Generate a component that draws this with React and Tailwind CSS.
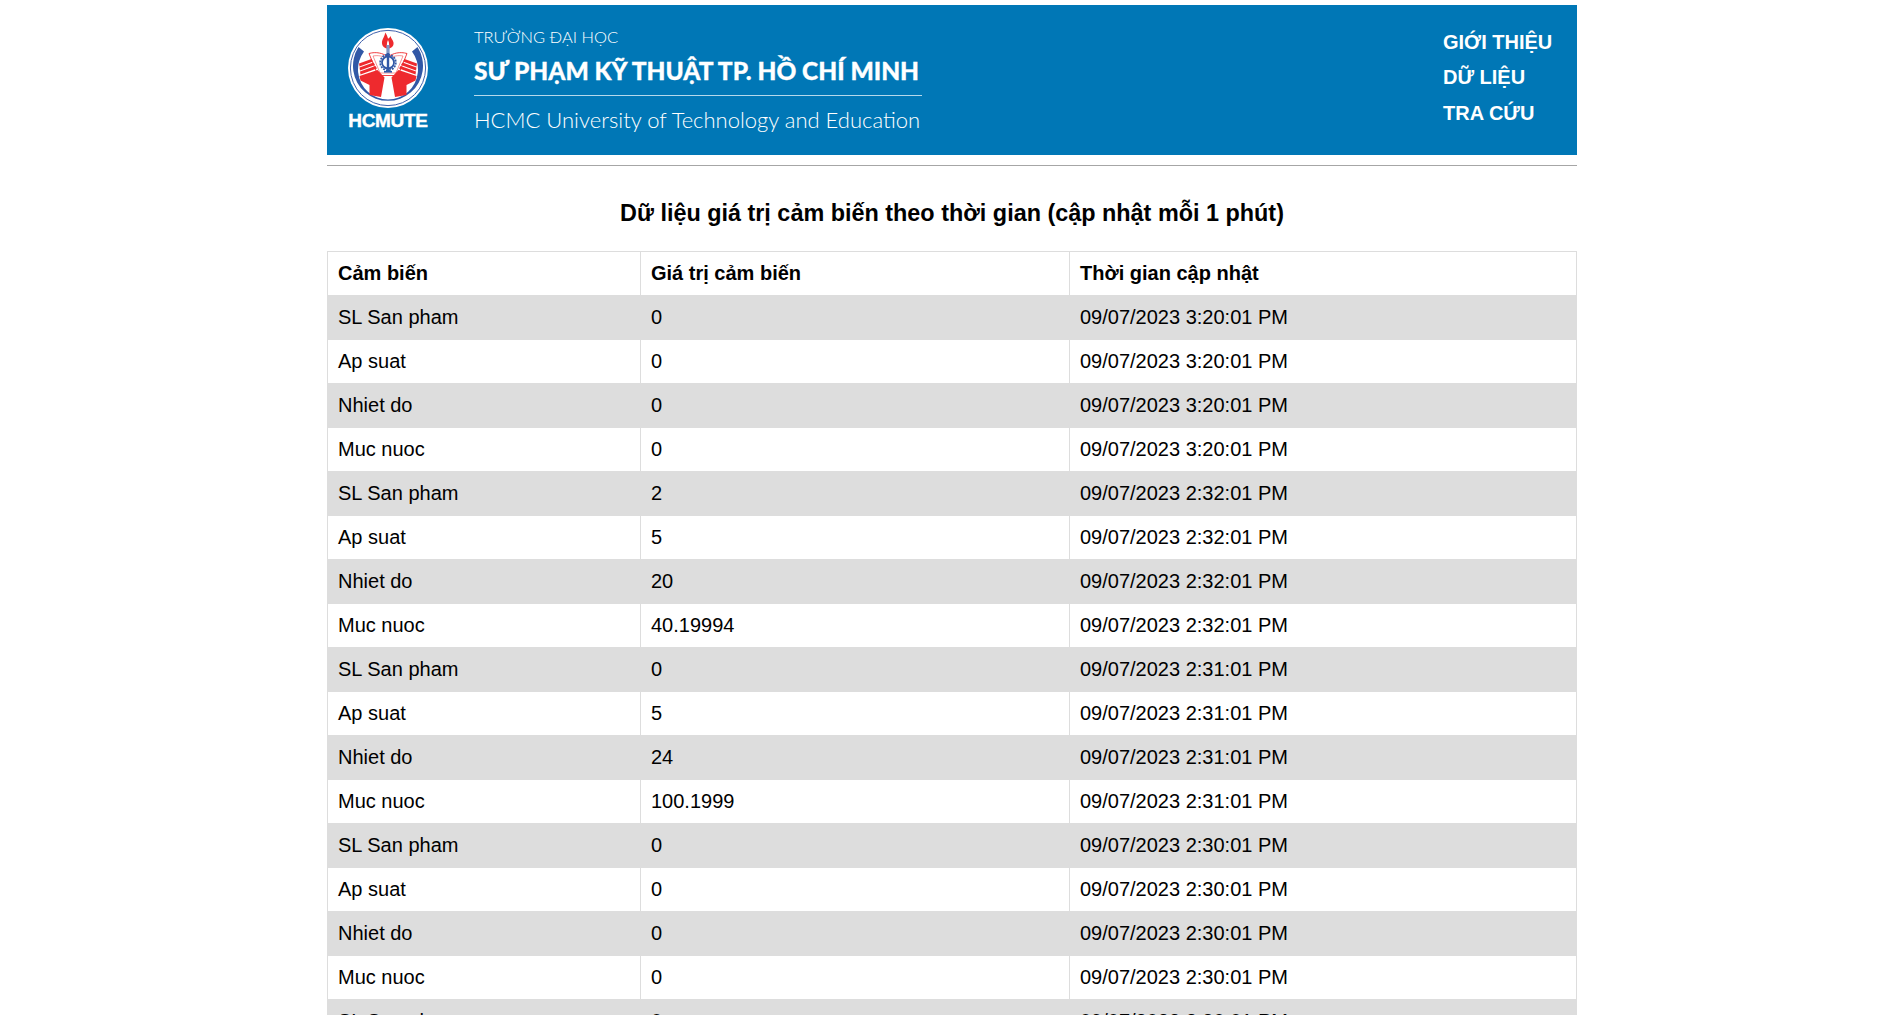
import React from 'react';

const rows = [
  ['SL San pham', '0', '09/07/2023 3:20:01 PM'],
  ['Ap suat', '0', '09/07/2023 3:20:01 PM'],
  ['Nhiet do', '0', '09/07/2023 3:20:01 PM'],
  ['Muc nuoc', '0', '09/07/2023 3:20:01 PM'],
  ['SL San pham', '2', '09/07/2023 2:32:01 PM'],
  ['Ap suat', '5', '09/07/2023 2:32:01 PM'],
  ['Nhiet do', '20', '09/07/2023 2:32:01 PM'],
  ['Muc nuoc', '40.19994', '09/07/2023 2:32:01 PM'],
  ['SL San pham', '0', '09/07/2023 2:31:01 PM'],
  ['Ap suat', '5', '09/07/2023 2:31:01 PM'],
  ['Nhiet do', '24', '09/07/2023 2:31:01 PM'],
  ['Muc nuoc', '100.1999', '09/07/2023 2:31:01 PM'],
  ['SL San pham', '0', '09/07/2023 2:30:01 PM'],
  ['Ap suat', '0', '09/07/2023 2:30:01 PM'],
  ['Nhiet do', '0', '09/07/2023 2:30:01 PM'],
  ['Muc nuoc', '0', '09/07/2023 2:30:01 PM'],
  ['SL San pham', '0', '09/07/2023 2:30:01 PM'],
];

const Logo = () => (
  <svg width="80" height="80" viewBox="0 0 80 80">
    <circle cx="40" cy="40" r="40" fill="#ffffff" />
    <circle cx="40" cy="40" r="37.6" fill="none" stroke="#3f62ad" strokeWidth="1" />
    {/* open ring */}
    <path d="M10.5 19 A35 35 0 1 0 69.5 19 L64 23.5 A30 30 0 1 1 16 23.5 Z" fill="#3158a6" />
    {/* flame and torch */}
    <path d="M37 4.5 C37.5 8 33.5 11 34 15.5 C34.5 19 37 20.5 40 20.5 C43.5 20.5 46 18 45.5 14.5 C45 11.5 43 11 42.5 8 C41.5 10 40.5 10.5 40 10.5 C39.5 8.5 38.5 6 37 4.5 Z" fill="#ee2a2e" />
    <path d="M40 12 C38.5 15 38.5 18 40 20 C41.5 18 41.5 15 40 12 Z" fill="#ffffff" />
    <rect x="38.4" y="17" width="3.2" height="11" fill="#7f96c6" />
    {/* book */}
    <path d="M21 25.5 C28 23.5 35 25 40 29 C45 25 52 23.5 59 25.5 L50 47.5 L30 47.5 Z" fill="#ffffff" stroke="#ee2a2e" strokeWidth="0.9" />
    <path d="M25 28 C30 27 35 28 40 31 C45 28 50 27 55 28 L48 45 L32 45 Z" fill="#ffffff" stroke="#ee2a2e" strokeWidth="0.5" />
    {/* gear with phi */}
    <circle cx="40" cy="34.5" r="7.8" fill="none" stroke="#3158a6" strokeWidth="1.8" strokeDasharray="2 1.05" />
    <circle cx="40" cy="34.5" r="6" fill="#ffffff" stroke="#3158a6" strokeWidth="1.8" />
    <rect x="38.8" y="25" width="2.4" height="19" fill="#3158a6" />
    <rect x="36" y="43" width="8" height="1.6" fill="#3158a6" />
    {/* left hand */}
    <path d="M11 35.5 L23.5 31 L25 33.5 L11.5 38.5 Z M11.5 39.5 L25.5 34.5 L27 37 L12 42.5 Z M12 43.5 L27.5 38 L29 40.5 L12.5 46.5 Z" fill="#ee2a2e" />
    <path d="M11.5 48 L29.5 42 L36.5 49.5 L33 69 L21.5 67 L21.5 57 L12.5 52.5 Z" fill="#ee2a2e" />
    {/* right hand */}
    <path d="M69 35.5 L56.5 31 L55 33.5 L68.5 38.5 Z M68.5 39.5 L54.5 34.5 L53 37 L68 42.5 Z M68 43.5 L52.5 38 L51 40.5 L67.5 46.5 Z" fill="#ee2a2e" />
    <path d="M68.5 48 L50.5 42 L43.5 49.5 L47 69 L58.5 67 L58.5 57 L67.5 52.5 Z" fill="#ee2a2e" />
  </svg>
);

export default function App() {
  return (
    <div className="h-screen overflow-hidden bg-white pl-4 pt-[5px] font-['Liberation_Sans',Arial,sans-serif] text-black">
      <div className="mx-auto w-[1250px]">
        <header className="flex h-[150px] items-center bg-[#0077b6] text-white">
          <div className="ml-[21px] flex w-[80px] flex-col items-center">
            <Logo />
            <span className="mt-[3px] mb-[1px] text-[19px] leading-5 font-bold tracking-[-0.3px] [-webkit-text-stroke:0.4px_white]">HCMUTE</span>
          </div>
          <div className="ml-[46px] flex w-[448px] flex-col font-['Lato',sans-serif]">
            <span className="text-[16.5px] leading-5 font-light whitespace-nowrap">TRƯỜNG ĐẠI HỌC</span>
            <span className="mt-[8px] border-b border-[#b5d9ec] pb-[8px] text-[24.5px] leading-8 font-black whitespace-nowrap [-webkit-text-stroke:0.3px_white]">SƯ PHẠM KỸ THUẬT TP. HỒ CHÍ MINH</span>
            <span className="mt-[10px] text-[22px] leading-7 font-light whitespace-nowrap">HCMC University of Technology and Education</span>
          </div>
          <nav className="mr-[24px] mb-[5px] ml-auto flex w-[110px] flex-col gap-[9px] text-[20px] leading-[26.5px] font-bold">
            <a>GIỚI THIỆU</a>
            <a>DỮ LIỆU</a>
            <a>TRA CỨU</a>
          </nav>
        </header>
        <hr className="mt-[10px] border-t border-[#a6a6a6]" />
        <h3 className="mt-[33px] mb-[24px] text-center text-[23.4px] leading-7 font-bold">Dữ liệu giá trị cảm biến theo thời gian (cập nhật mỗi 1 phút)</h3>
        <table className="w-full table-fixed border-collapse border border-[#dddddd] text-[20px] leading-6">
          <thead>
            <tr>
              <th className="w-[313px] border border-[#dddddd] px-[10px] pt-[9px] pb-[10px] text-left font-bold">Cảm biến</th>
              <th className="w-[429px] border border-[#dddddd] px-[10px] pt-[9px] pb-[10px] text-left font-bold">Giá trị cảm biến</th>
              <th className="border border-[#dddddd] px-[10px] pt-[9px] pb-[10px] text-left font-bold">Thời gian cập nhật</th>
            </tr>
          </thead>
          <tbody>
            {rows.map((r, i) => (
              <tr key={i} className={i % 2 === 0 ? 'bg-[#dddddd]' : ''}>
                {r.map((c, j) => (
                  <td key={j} className="border border-[#dddddd] px-[10px] pt-[9px] pb-[10px]">{c}</td>
                ))}
              </tr>
            ))}
          </tbody>
        </table>
      </div>
    </div>
  );
}
